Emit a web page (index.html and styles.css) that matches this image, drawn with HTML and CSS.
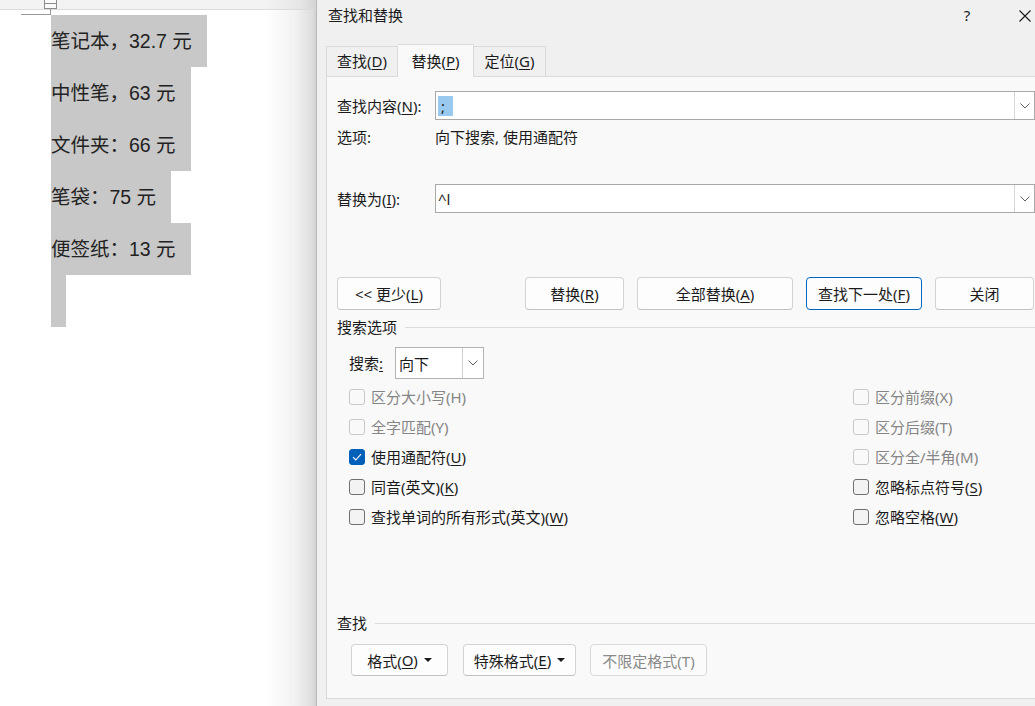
FILE: index.html
```html
<!DOCTYPE html>
<html lang="zh-CN">
<head>
    <meta charset="UTF-8">
    <meta name="viewport" content="width=device-width, initial-scale=1.0">
    <title>查找和替换</title>
    <link rel="stylesheet" href="styles.css">
</head>
<body>
    <div class="app">
        <!-- document behind the dialog -->
        <div class="doc">
            <div class="doc-strip"></div>
            <svg class="corner-mark" width="60" height="16" viewBox="0 0 60 16">
                <rect x="44.5" y="-1.5" width="12" height="10" fill="#fafafa" stroke="#8c8c8c"/>
                <line x1="44.5" y1="3.5" x2="56.5" y2="3.5" stroke="#8c8c8c"/>
                <line x1="50.5" y1="8.5" x2="50.5" y2="14.5" stroke="#9a9a9a"/>
                <line x1="21" y1="14.5" x2="51" y2="14.5" stroke="#9a9a9a"/>
            </svg>
            <div class="doc-body">
                <p class="para">笔记本，32.7 元</p>
                <p class="para">中性笔，63 元</p>
                <p class="para">文件夹：66 元</p>
                <p class="para">笔袋：75 元</p>
                <p class="para">便签纸：13 元</p>
                <p class="para empty"></p>
            </div>
        </div>

        <!-- find and replace dialog -->
        <div class="dialog">
            <div class="titlebar">
                <span class="title">查找和替换</span>
                <span class="help">?</span>
                <span class="close">
                    <svg width="12" height="12" viewBox="0 0 12 12">
                        <path d="M0.5 0.5 L11.5 11.5 M11.5 0.5 L0.5 11.5" stroke="#1b1b1b" stroke-width="1.1" fill="none"/>
                    </svg>
                </span>
            </div>

            <div class="tabs">
                <div class="tab">查找(<u>D</u>)</div>
                <div class="tab active">替换(<u>P</u>)</div>
                <div class="tab">定位(<u>G</u>)</div>
            </div>

            <div class="panel">
                <div class="field-row find-row">
                    <label class="field-label">查找内容(<u>N</u>):</label>
                    <div class="combo">
                        <span class="combo-text"><span class="selected">;</span></span>
                        <span class="combo-btn">
                            <svg width="10" height="6" viewBox="0 0 10 6"><path d="M0.5 0.5 L5 5 L9.5 0.5" stroke="#606060" fill="none"/></svg>
                        </span>
                    </div>
                </div>

                <div class="options-row">
                    <span class="field-label">选项:</span>
                    <span>向下搜索, 使用通配符</span>
                </div>

                <div class="field-row replace-row">
                    <label class="field-label">替换为(<u>I</u>):</label>
                    <div class="combo">
                        <span class="combo-text">^l</span>
                        <span class="combo-btn">
                            <svg width="10" height="6" viewBox="0 0 10 6"><path d="M0.5 0.5 L5 5 L9.5 0.5" stroke="#606060" fill="none"/></svg>
                        </span>
                    </div>
                </div>

                <div class="btn-row">
                    <button class="btn btn-less">&lt;&lt; 更少(<u>L</u>)</button>
                    <button class="btn btn-replace">替换(<u>R</u>)</button>
                    <button class="btn btn-all">全部替换(<u>A</u>)</button>
                    <button class="btn btn-next default">查找下一处(<u>F</u>)</button>
                    <button class="btn btn-close">关闭</button>
                </div>

                <div class="group-title">
                    <span>搜索选项</span>
                    <span class="group-line"></span>
                </div>

                <div class="search-dir">
                    <span class="dir-label">搜索<u>:</u></span>
                    <div class="select">
                        <span class="select-text">向下</span>
                        <span class="select-btn">
                            <svg width="10" height="6" viewBox="0 0 10 6"><path d="M0.5 0.5 L5 5 L9.5 0.5" stroke="#606060" fill="none"/></svg>
                        </span>
                    </div>
                </div>

                <div class="checks">
                    <div class="check disabled"><span class="box"></span>区分大小写(H)</div>
                    <div class="check disabled"><span class="box"></span>区分前缀(X)</div>
                    <div class="check disabled"><span class="box"></span>全字匹配(Y)</div>
                    <div class="check disabled"><span class="box"></span>区分后缀(T)</div>
                    <div class="check">
                        <span class="box checked">
                            <svg width="10" height="8" viewBox="0 0 10 8"><path d="M1 4.2 L3.8 7 L9 1.2" stroke="#fff" stroke-width="1.1" fill="none"/></svg>
                        </span>使用通配符(<u>U</u>)
                    </div>
                    <div class="check disabled"><span class="box"></span>区分全/半角(M)</div>
                    <div class="check"><span class="box"></span>同音(英文)(<u>K</u>)</div>
                    <div class="check"><span class="box"></span>忽略标点符号(<u>S</u>)</div>
                    <div class="check"><span class="box"></span>查找单词的所有形式(英文)(<u>W</u>)</div>
                    <div class="check"><span class="box"></span>忽略空格(<u>W</u>)</div>
                </div>

                <div class="group-title find-title">
                    <span>查找</span>
                    <span class="group-line"></span>
                </div>

                <div class="btn-row bottom-row">
                    <button class="btn btn-format">格式(<u>O</u>)<span class="caret"></span></button>
                    <button class="btn btn-special">特殊格式(<u>E</u>)<span class="caret"></span></button>
                    <button class="btn btn-noformat" disabled>不限定格式(T)</button>
                </div>
            </div>
        </div>
    </div>
</body>
</html>
```

FILE: styles.css
```css
body {
    margin: 0;
    padding: 0;
    width: 1035px;
    height: 706px;
    overflow: hidden;
    background: #fff;
}

u {
    text-decoration: underline;
    text-underline-offset: 2px;
}

.app {
    display: flex;
    width: 1035px;
    height: 706px;
}

/* document area */

.doc {
    position: relative;
    flex: 0 0 316px;
    height: 706px;
    background: linear-gradient(to right, #fff 0, #fff 266px, #f1f1f1 296px, #dedede 312px, #d2d2d2 316px);
}

.doc-strip {
    height: 9px;
    border-bottom: 1px solid #dcdcdc;
    background: linear-gradient(to right, #f3f3f3 0, #f3f3f3 266px, #e6e6e6 300px, #d4d4d4 316px);
}

.corner-mark {
    position: absolute;
    left: 0;
    top: 0;
}

.doc-body {
    display: flex;
    flex-direction: column;
    align-items: flex-start;
    padding: 5px 0 0 51px;
    font-family: "Liberation Sans", "Noto Sans CJK SC", sans-serif;
    font-size: 19.5px;
    color: #222;
}

.para {
    margin: 0;
    height: 52px;
    line-height: 52px;
    padding-right: 15px;
    background: #c8c8c8;
    white-space: nowrap;
}

.para.empty {
    width: 0;
}

/* dialog */

.dialog {
    flex: 0 0 740px;
    box-sizing: border-box;
    height: 706px;
    border-left: 1px solid #b9b9b9;
    background: #f0f0f0;
    padding: 0 10px 0 9px;
    font-family: "Noto Sans", "Noto Sans CJK SC", sans-serif;
    font-size: 15px;
    color: #1b1b1b;
}

.titlebar {
    display: flex;
    align-items: center;
    box-sizing: border-box;
    height: 33px;
    padding-bottom: 4px;
    margin-left: 2px;
}

.title {
    flex: 1;
    line-height: 20px;
}

.help {
    width: 20px;
    text-align: center;
    margin-right: 42px;
    line-height: 20px;
}

.close {
    display: flex;
    width: 12px;
    height: 12px;
    margin-top: 3px;
    margin-right: 15px;
}

.tabs {
    display: flex;
    align-items: flex-end;
    height: 43px;
}

.tab {
    box-sizing: border-box;
    height: 30px;
    line-height: 28px;
    text-align: center;
    border: 1px solid #dadada;
    border-bottom: none;
    background: #f0f0f0;
}

.tab:nth-child(1) {
    width: 72px;
}

.tab:nth-child(2) {
    width: 76px;
}

.tab:nth-child(3) {
    width: 72px;
    border-left: none;
}

.tab.active {
    position: relative;
    height: 33px;
    margin-bottom: -1px;
    line-height: 32px;
    background: #f9f9f9;
    border-left: none;
    z-index: 1;
}

.panel {
    box-sizing: border-box;
    height: 623px;
    border: 1px solid #dadada;
    background: #f9f9f9;
    padding: 14px 10px 0 10px;
}

.field-row {
    display: flex;
    align-items: center;
}

.field-label {
    width: 98px;
    flex: 0 0 98px;
    line-height: 20px;
}

.combo {
    flex: 1;
    display: flex;
    box-sizing: border-box;
    height: 29px;
    border: 1px solid #a9a9a9;
    background: #fff;
}

.combo-text {
    flex: 1;
    display: flex;
    align-items: center;
    padding-left: 2px;
    line-height: 20px;
}

.selected {
    display: inline-block;
    width: 12px;
    height: 20px;
    padding-left: 3px;
    background: #99c9ef;
}

.combo-btn {
    display: flex;
    align-items: center;
    justify-content: center;
    box-sizing: border-box;
    width: 20px;
    margin: 0;
    border-left: 1px solid #d6d6d6;
    background: #fff;
}

.options-row {
    display: flex;
    align-items: center;
    margin-top: 7px;
    line-height: 20px;
}

.replace-row {
    margin-top: 37px;
}

.btn-row {
    display: flex;
    margin-top: 64px;
}

.btn {
    box-sizing: border-box;
    height: 33px;
    padding: 0;
    border: 1px solid #d3d3d3;
    border-bottom-color: #c2c2c2;
    border-radius: 4px;
    background: #fdfdfd;
    font-family: inherit;
    font-size: 15px;
    color: #1b1b1b;
    display: flex;
    align-items: center;
    justify-content: center;
}

.btn + .btn {
    margin-left: 13px;
}

.btn-less {
    width: 104px;
}

.btn-row .btn-replace {
    width: 99px;
    margin-left: 84px;
}

.btn-all {
    width: 156px;
}

.btn-next {
    width: 116px;
}

.btn.default {
    border: 1px solid #0067c0;
}

.btn-close {
    width: 99px;
}

.group-title {
    display: flex;
    align-items: center;
    margin-top: 7px;
    line-height: 20px;
}

.group-line {
    flex: 1;
    height: 1px;
    margin-left: 8px;
    background: #dcdcdc;
}

.search-dir {
    display: flex;
    align-items: center;
    margin-top: 10px;
    padding-left: 12px;
}

.dir-label {
    width: 46px;
    line-height: 20px;
}

.select {
    display: flex;
    box-sizing: border-box;
    width: 89px;
    height: 32px;
    border: 1px solid #b3b3b3;
    background: #fff;
}

.select-text {
    flex: 1;
    display: flex;
    align-items: center;
    padding-left: 3px;
}

.select-btn {
    display: flex;
    align-items: center;
    justify-content: center;
    width: 20px;
    border-left: 1px solid #cfcfcf;
}

.checks {
    display: grid;
    grid-template-columns: 504px 1fr;
    grid-auto-rows: 30px;
    margin-top: 3px;
    padding-left: 12px;
}

.check {
    display: flex;
    align-items: center;
    white-space: nowrap;
    line-height: 20px;
}

.box {
    box-sizing: border-box;
    width: 16px;
    height: 16px;
    margin-right: 6px;
    border: 1px solid #6f6f6f;
    border-radius: 3px;
    background: #f3f3f3;
    display: flex;
    align-items: center;
    justify-content: center;
}

.box.checked {
    border-color: #005fb8;
    background: #005fb8;
}

.check.disabled {
    color: #858585;
}

.check.disabled .box {
    border-color: #c8c8c8;
    background: #f9f9f9;
}

.find-title {
    margin-top: 81px;
}

.bottom-row {
    margin-top: 11px;
    padding-left: 14px;
}

.bottom-row .btn {
    height: 32px;
}

.btn-format {
    width: 97px;
}

.bottom-row .btn-special {
    width: 113px;
    margin-left: 15px;
}

.bottom-row .btn-noformat {
    width: 117px;
    margin-left: 14px;
    color: #8a8a8a;
    border-color: #dadada;
    background: #fbfbfb;
}

.caret {
    width: 0;
    height: 0;
    margin-left: 6px;
    border-left: 4px solid transparent;
    border-right: 4px solid transparent;
    border-top: 4px solid #1b1b1b;
}
```
